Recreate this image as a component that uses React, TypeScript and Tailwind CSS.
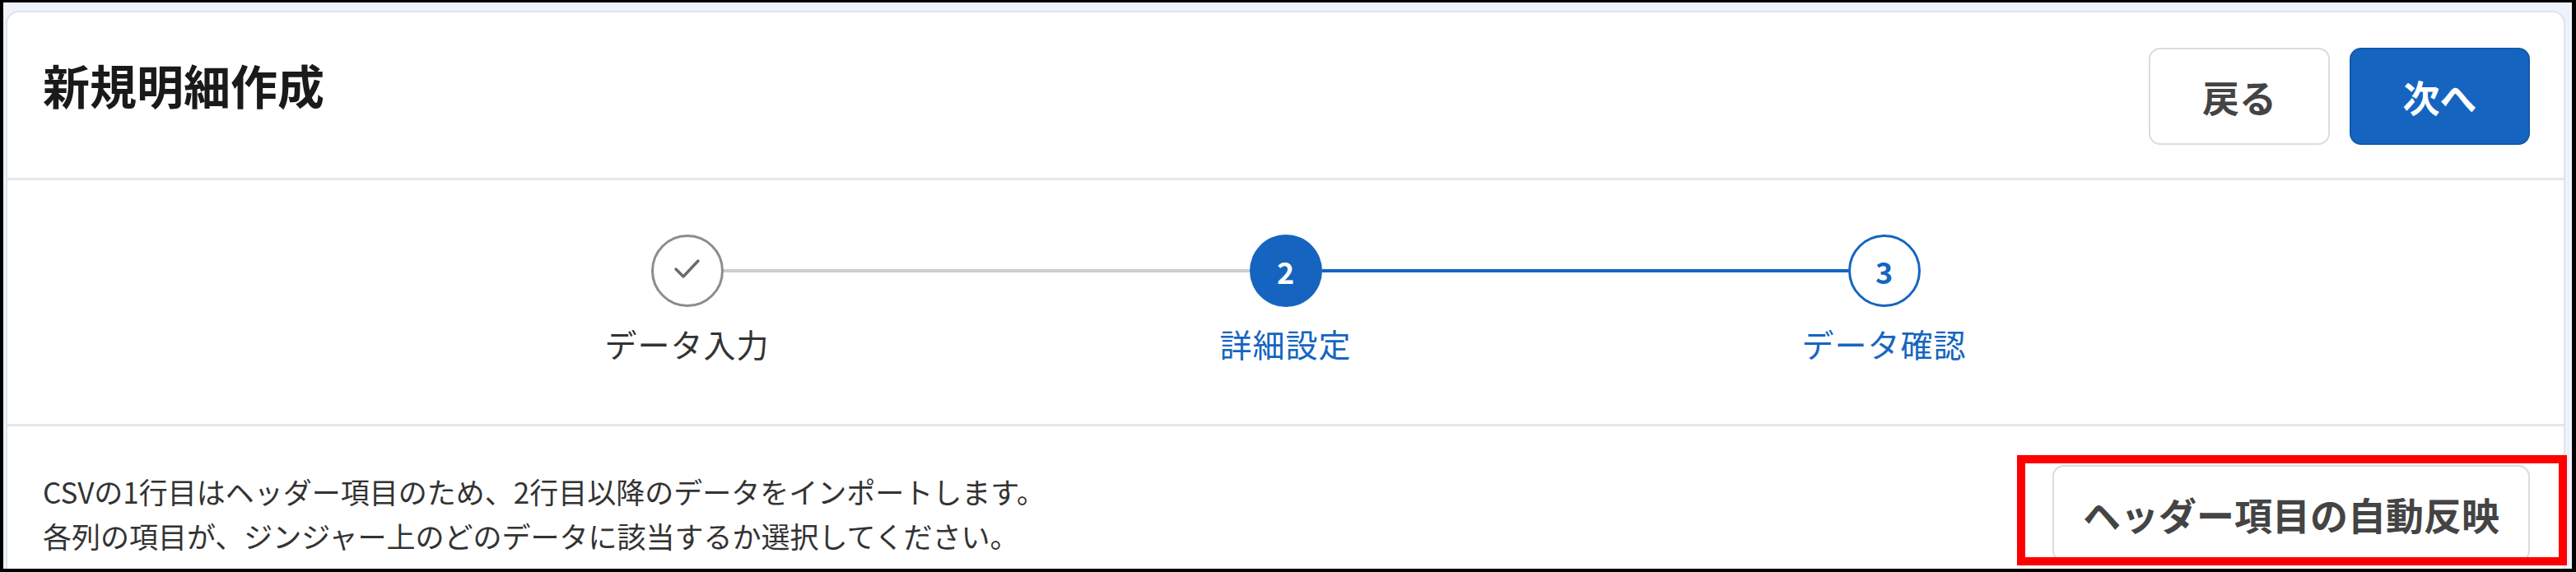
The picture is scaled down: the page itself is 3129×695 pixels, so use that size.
import React from "react";

const FONT = { fontFamily: '"Noto Sans CJK JP", "Noto Sans", sans-serif' };

function Step({
  kind,
  num,
  label,
}: {
  kind: "done" | "active" | "todo";
  num?: string;
  label: string;
}) {
  return (
    <div className="flex w-[88px] flex-col items-center">
      {kind === "done" && (
        <div className="relative h-[88px] w-[88px] rounded-full border-[3px] border-[#8c8c8c] bg-white">
          <svg viewBox="0 0 88 88" className="absolute inset-[-3px] h-[88px] w-[88px]">
            <polyline
              points="30,42 39,51 57,32"
              fill="none"
              stroke="#6b6b6b"
              strokeWidth="3.5"
              strokeLinecap="round"
              strokeLinejoin="round"
            />
          </svg>
        </div>
      )}
      {kind === "active" && (
        <div className="flex h-[88px] w-[88px] items-center justify-center rounded-full bg-[#1565c0] text-[36px] font-bold leading-none text-white">
          {num}
        </div>
      )}
      {kind === "todo" && (
        <div className="flex h-[88px] w-[88px] items-center justify-center rounded-full border-[3px] border-[#1565c0] bg-white text-[36px] font-bold leading-none text-[#1565c0]">
          {num}
        </div>
      )}
      <div className="mt-[25px] flex w-[88px] justify-center">
        <span
          className={
            "whitespace-nowrap text-[39px] leading-none tracking-[1px] " +
            (kind === "done" ? "text-[#333333]" : "text-[#1565c0]")
          }
        >
          {label}
        </span>
      </div>
    </div>
  );
}

export default function App() {
  return (
    <div
      style={FONT}
      className="relative flex h-[695px] w-[3129px] flex-col border-b-4 border-l-4 border-r-[5px] border-t-[3px] border-black bg-[#eef3fb]"
    >
      <div className="ml-[3px] mr-[8px] mt-[10px] flex flex-1 flex-col rounded-t-[16px] border-2 border-b-0 border-[#dde3ea] bg-white">
        {/* Header */}
        <div className="flex h-[204px] items-start justify-between border-b-[3px] border-[#e6e6e6] pl-[43px] pr-[41px] pt-[43px]">
          <h1 className="mt-[16px] text-[57px] font-bold leading-none text-[#1a1a1a]">
            新規明細作成
          </h1>
          <div className="flex gap-[24px]">
            <button className="flex h-[118px] w-[220px] items-center justify-center rounded-[14px] border-2 border-[#dcdcdc] bg-white text-[45px] font-bold leading-none text-[#444444]">
              戻る
            </button>
            <button className="flex h-[118px] w-[219px] items-center justify-center rounded-[14px] border-2 border-[#1259ad] bg-[#1565c0] text-[45px] font-bold leading-none text-white">
              次へ
            </button>
          </div>
        </div>

        {/* Stepper */}
        <div className="flex h-[299px] justify-center border-b-[3px] border-[#e6e6e6] pt-[66px]">
          <div className="flex items-start">
            <Step kind="done" label="データ入力" />
            <div className="mt-[42px] h-[4px] w-[639px] bg-[#cccccc]" />
            <Step kind="active" num="2" label="詳細設定" />
            <div className="mt-[42px] h-[4px] w-[639px] bg-[#1565c0]" />
            <Step kind="todo" num="3" label="データ確認" />
          </div>
        </div>

        {/* Bottom */}
        <div className="flex flex-1 items-start justify-between pl-[43px] pr-[41px] pt-[47px]">
          <div className="mt-[5px] text-[35px] leading-[54px] text-[#333333]">
            <p>CSVの1行目はヘッダー項目のため、2行目以降のデータをインポートします。</p>
            <p>各列の項目が、ジンジャー上のどのデータに該当するか選択してください。</p>
          </div>
          <button className="flex h-[118px] w-[580px] items-center justify-center rounded-[14px] border-2 border-[#dcdcdc] bg-white text-[46px] font-bold leading-none text-[#444444]">
            ヘッダー項目の自動反映
          </button>
        </div>
      </div>

      {/* Red annotation box */}
      <div className="pointer-events-none absolute left-[2446px] top-[550px] h-[134px] w-[668px] border-[10px] border-[#ff0000]" />
    </div>
  );
}
